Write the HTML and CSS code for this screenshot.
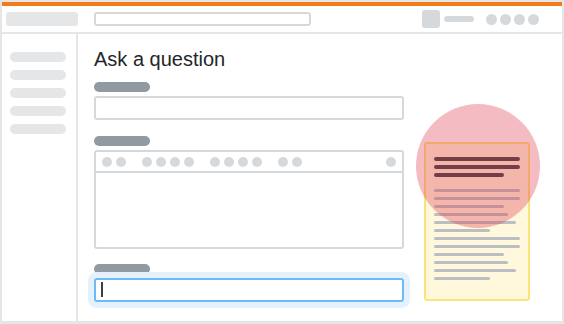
FILE: index.html
```html
<!DOCTYPE html>
<html>
<head>
<meta charset="utf-8">
<link rel="stylesheet" href="styles.css">
</head>
<body>
<div class="frame">
  <div class="topbar"></div>
  <header class="header">
    <div class="logo"></div>
    <div class="search"></div>
    <div class="header-right">
      <div class="avatar"></div>
      <div class="rep"></div>
      <div class="hdots">
        <span class="hdot"></span><span class="hdot"></span><span class="hdot"></span><span class="hdot"></span>
      </div>
    </div>
  </header>
  <div class="body">
    <nav class="sidebar">
      <div class="nav-item"></div>
      <div class="nav-item"></div>
      <div class="nav-item"></div>
      <div class="nav-item"></div>
      <div class="nav-item"></div>
    </nav>
    <main class="content">
      <section class="form">
        <h1 class="title">Ask a question</h1>
        <div class="label"></div>
        <div class="input"></div>
        <div class="label label-gap"></div>
        <div class="editor">
          <div class="toolbar">
            <div class="group"><span class="tdot"></span><span class="tdot"></span></div>
            <div class="group"><span class="tdot"></span><span class="tdot"></span><span class="tdot"></span><span class="tdot"></span></div>
            <div class="group"><span class="tdot"></span><span class="tdot"></span><span class="tdot"></span><span class="tdot"></span></div>
            <div class="group"><span class="tdot"></span><span class="tdot"></span></div>
            <div class="group group-end"><span class="tdot"></span></div>
          </div>
          <div class="editor-area"></div>
        </div>
        <div class="label label-gap2"></div>
        <div class="input input-focus"><span class="caret"></span></div>
      </section>
      <aside class="card">
        <div class="circle"></div>
        <div class="line dark w86"></div>
        <div class="line dark w86"></div>
        <div class="line dark w70"></div>
        <div class="line gray w86 first-gray"></div>
        <div class="line gray w86"></div>
        <div class="line gray w70"></div>
        <div class="line gray w74"></div>
        <div class="line gray w82"></div>
        <div class="line gray w56"></div>
        <div class="line gray w86"></div>
        <div class="line gray w86"></div>
        <div class="line gray w70"></div>
        <div class="line gray w74"></div>
        <div class="line gray w82"></div>
        <div class="line gray w56"></div>
      </aside>
    </main>
  </div>
</div>
</body>
</html>
```

FILE: styles.css
```css
* { box-sizing: border-box; margin: 0; padding: 0; }
html, body { background: #ffffff; }
body { margin: 0; font-family: "Liberation Sans", Arial, sans-serif; }

.frame {
  width: 564px;
  height: 324px;
  border: 2px solid #e4e6e8;
  border-bottom-width: 3px;
  display: flex;
  flex-direction: column;
  background: #fff;
  overflow: hidden;
}

.topbar { height: 4px; background: #f27c1c; flex: none; }

.header {
  height: 28px;
  flex: none;
  display: flex;
  align-items: center;
  padding: 0 23px 0 4px;
  border-bottom: 2px solid #e4e6e8;
}
.logo { width: 72px; height: 14px; background: #e4e6e8; border-radius: 3px; }
.search {
  width: 217px; height: 14px; margin-left: 16px;
  border: 2px solid #d6d9dc; border-radius: 3px;
}
.header-right { margin-left: auto; display: flex; align-items: center; }
.avatar { width: 18px; height: 18px; background: #d6d9dc; border-radius: 3px; }
.rep { width: 30px; height: 6px; background: #d6d9dc; border-radius: 3px; margin-left: 4px; }
.hdots { display: flex; gap: 3px; margin-left: 12px; }
.hdot { width: 11px; height: 11px; border-radius: 50%; background: #d6d9dc; }

.body { flex: 1; display: flex; min-height: 0; }
.sidebar {
  width: 76px; flex: none;
  border-right: 2px solid #e4e6e8;
  padding: 18px 0 0 8px;
  display: flex; flex-direction: column; gap: 8px;
}
.nav-item { width: 56px; height: 10px; background: #e4e6e8; border-radius: 5px; }

.content { flex: 1; display: flex; padding: 14px 0 0 16px; }
.form { width: 310px; display: flex; flex-direction: column; }
.title {
  font-size: 20px; font-weight: 400; line-height: 22px;
  color: #232629; margin-bottom: 12px;
}
.label { width: 56px; height: 10px; background: #9199a1; border-radius: 5px; margin-bottom: 4px; flex: none; }
.label-gap { margin-top: 16px; }
.label-gap2 { margin-top: 15px; }
.input { height: 24px; border: 2px solid #d6d9dc; border-radius: 3px; flex: none; }
.input-focus {
  border-color: #6bbbf7;
  box-shadow: 0 0 0 6px #e5f2fd;
  padding: 2px 0 0 5px;
}
.caret { display: block; width: 2px; height: 15px; background: #3b4045; }

.editor { height: 99px; flex: none; border: 2px solid #d6d9dc; border-radius: 3px; display: flex; flex-direction: column; }
.toolbar {
  height: 21px; flex: none;
  border-bottom: 2px solid #d6d9dc;
  display: flex; align-items: center; gap: 16px;
  padding: 0 6px;
}
.group { display: flex; gap: 4px; }
.group-end { margin-left: auto; }
.tdot { width: 10px; height: 10px; border-radius: 50%; background: #d6d9dc; }

.card {
  position: relative;
  width: 106px; height: 159px;
  margin: 94px 0 0 20px;
  background: #fff8dc;
  border: 2px solid #fde27a;
  border-radius: 3px;
  padding: 13px 8px 0;
  display: flex; flex-direction: column; gap: 4px;
}
.line { height: 4px; border-radius: 2px; flex: none; }
.dark { background: #3b4045; }
.gray { background: #bbbfc3; height: 3px; margin-bottom: 1px; }
.first-gray { margin-top: 8px; }
.w86 { width: 86px; } .w82 { width: 82px; } .w74 { width: 74px; }
.w70 { width: 70px; } .w56 { width: 56px; }
.circle {
  position: absolute;
  left: -10px; top: -40px;
  width: 124px; height: 124px;
  border-radius: 50%;
  background: rgba(224, 60, 80, 0.35);
  z-index: 2;
}
```
